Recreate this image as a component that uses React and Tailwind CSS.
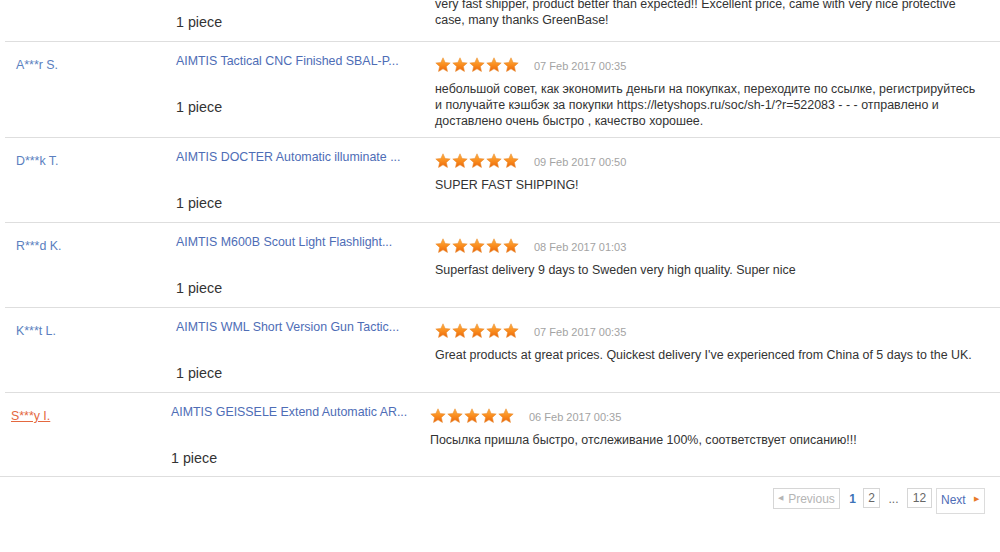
import React from "react";

const Star = ({ id }) => (
  <svg width="16" height="16" viewBox="0 0 24 24">
    <defs>
      <linearGradient id={id} x1="0" y1="0" x2="0" y2="1">
        <stop offset="0" stopColor="#ffb347" />
        <stop offset="0.55" stopColor="#f98a1c" />
        <stop offset="1" stopColor="#e8650c" />
      </linearGradient>
    </defs>
    <path
      d="M12 1.2l3.2 7 7.6.8-5.7 5.1 1.6 7.6L12 17.8l-6.7 3.9 1.6-7.6L1.2 9l7.6-.8z"
      fill={`url(#${id})`}
      stroke="#e98a2e"
      strokeWidth="0.8"
      strokeLinejoin="round"
    />
  </svg>
);

const Stars = ({ k }) => (
  <div className="flex gap-[1px]">
    {[0, 1, 2, 3, 4].map((i) => (
      <Star key={i} id={`g${k}${i}`} />
    ))}
  </div>
);

const rows = [
  {
    name: "",
    product: "",
    date: "",
    lines: [
      "very fast shipper, product better than expected!! Excellent price, came with very nice protective",
      "case, many thanks GreenBase!",
    ],
    h: "h-[85px]",
    top: true,
  },
  {
    name: "A***r S.",
    product: "AIMTIS Tactical CNC Finished SBAL-P...",
    date: "07 Feb 2017 00:35",
    lines: [
      "небольшой совет, как экономить деньги на покупках, переходите по ссылке, регистрируйтесь",
      "и получайте кэшбэк за покупки https://letyshops.ru/soc/sh-1/?r=522083 - - - отправлено и",
      "доставлено очень быстро , качество хорошее.",
    ],
    h: "h-[96px]",
  },
  {
    name: "D***k T.",
    product: "AIMTIS DOCTER Automatic illuminate ...",
    date: "09 Feb 2017 00:50",
    lines: ["SUPER FAST SHIPPING!"],
    h: "h-[85px]",
  },
  {
    name: "R***d K.",
    product: "AIMTIS M600B Scout Light Flashlight...",
    date: "08 Feb 2017 01:03",
    lines: ["Superfast delivery 9 days to Sweden very high quality. Super nice"],
    h: "h-[85px]",
  },
  {
    name: "K***t L.",
    product: "AIMTIS WML Short Version Gun Tactic...",
    date: "07 Feb 2017 00:35",
    lines: [
      "Great products at great prices. Quickest delivery I've experienced from China of 5 days to the UK.",
    ],
    h: "h-[85px]",
  },
  {
    name: "S***y I.",
    product: "AIMTIS GEISSELE Extend Automatic AR...",
    date: "06 Feb 2017 00:35",
    lines: ["Посылка пришла быстро, отслеживание 100%, соответствует описанию!!!"],
    h: "h-[84px]",
    last: true,
  },
];

const Row = ({ r, k }) => (
  <div
    className={`flex ${r.h} border-b border-[#dedede] ${r.last ? "ml-0" : "ml-[5px]"}`}
  >
    <div className="w-[171px] shrink-0 pl-[11px] pt-[15px] text-[12.4px] leading-[16px]">
      {r.last ? (
        <span className="text-[#e4683f] underline">{r.name}</span>
      ) : (
        <span className="text-[#5b7fc0]">{r.name}</span>
      )}
    </div>
    <div className="w-[259px] shrink-0 pt-[11px]">
      <div className="h-[16px] text-[12.4px] leading-[16px] text-[#4e6db6] whitespace-nowrap">
        {r.product}
      </div>
      <div className="mt-[29px] text-[14.3px] leading-[18px] text-[#333]">1 piece</div>
    </div>
    <div className="flex-1 pt-[15px]">
      <div className="flex h-[16px] items-center">
        {!r.top && <Stars k={k} />}
        {!r.top && (
          <span className="ml-[15px] mt-[2px] text-[11px] text-[#a3a3a3]">{r.date}</span>
        )}
      </div>
      <div className="mt-[8px] text-[12.45px] leading-[16px] text-[#333]">
        {r.lines.map((l, i) => (
          <div key={i} className="whitespace-nowrap">
            {l}
          </div>
        ))}
      </div>
    </div>
  </div>
);

export default function App() {
  return (
    <div
      className="w-[1000px] h-[552px] overflow-hidden bg-white"
      style={{ fontFamily: '"Liberation Sans", Arial, sans-serif' }}
    >
      <div className="-mt-[43px]">
        {rows.map((r, i) => (
          <Row key={i} r={r} k={i} />
        ))}
      </div>
      <div className="mt-[11px] flex items-start justify-end pr-[15px] text-[12px]">
        <div className="flex h-[21px] w-[67px] items-center justify-center border border-[#d6d6d6] text-[#b5b5b5]">
          <span className="mr-[5px] text-[7px]">◀</span>Previous
        </div>
        <div className="ml-[8px] flex h-[21px] w-[9px] items-center justify-center font-bold text-[#3d73b8]">
          1
        </div>
        <div className="ml-[6px] flex h-[20px] w-[17px] items-center justify-center border border-[#d6d6d6] text-[#666]">
          2
        </div>
        <div className="flex h-[21px] w-[27px] items-center justify-center text-[#666]">...</div>
        <div className="flex h-[20px] w-[25px] items-center justify-center border border-[#d6d6d6] text-[#666]">
          12
        </div>
        <div className="ml-[4px] flex h-[26px] w-[49px] items-start border border-[#dcdcdc] pl-[4px] pt-[2px] text-[#4e6db6]">
          Next
          <span className="ml-[8px] mt-[3px] text-[7px] text-[#e8792a]">▶</span>
        </div>
      </div>
    </div>
  );
}
